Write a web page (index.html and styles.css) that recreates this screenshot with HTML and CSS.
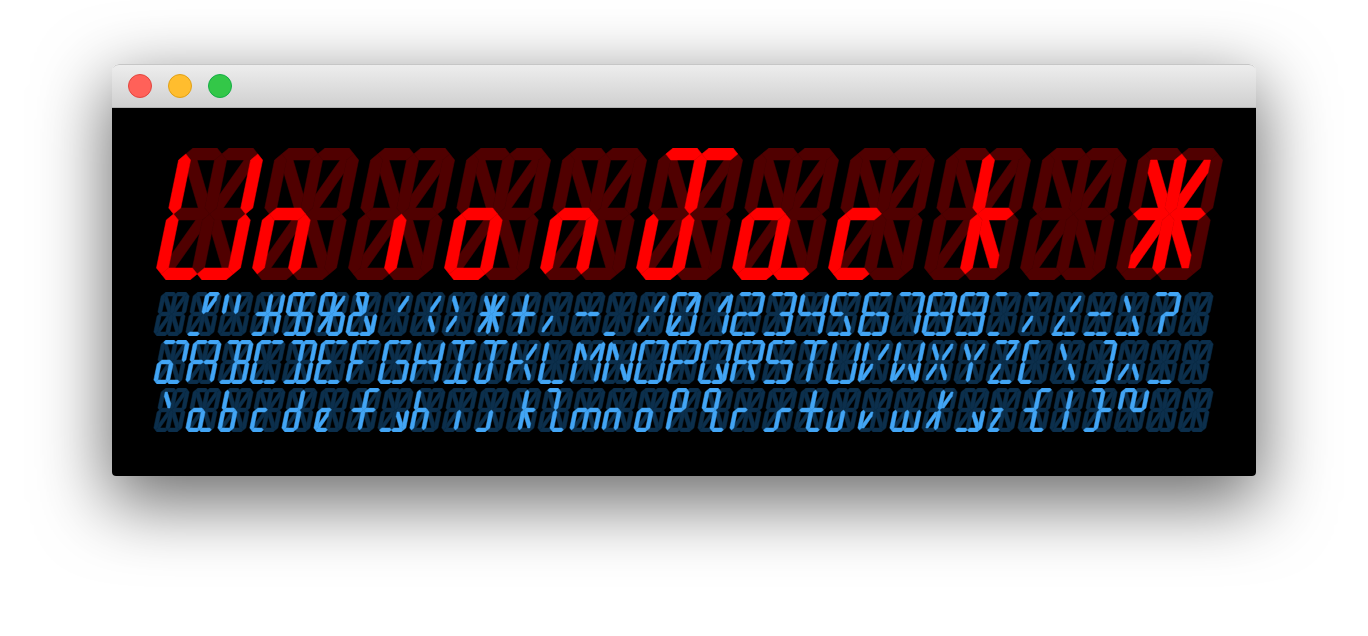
FILE: index.html
```html
<!DOCTYPE html>
<html lang="en">
<head>
<meta charset="utf-8">
<title>Union Jack *</title>
<link rel="stylesheet" href="styles.css">
</head>
<body>
<main class="window">
  <header class="titlebar">
    <span class="light light-close"></span>
    <span class="light light-min"></span>
    <span class="light light-max"></span>
  </header>
  <section class="screen">
    <svg class="display display-large" data-text="UnionJack *" data-cells="11"></svg>
    <div class="charset">
      <svg class="display display-small" data-text=" !&quot;#$%&amp;'()*+,-./0123456789:;&lt;=&gt;?" data-cells="33"></svg>
      <svg class="display display-small" data-text="@ABCDEFGHIJKLMNOPQRSTUVWXYZ[\]^_" data-cells="33"></svg>
      <svg class="display display-small" data-text="`abcdefghijklmnopqrstuvwxyz{|}~" data-cells="33"></svg>
    </div>
  </section>
</main>
<script src="script.js"></script>
</body>
</html>
```
FILE: styles.css
```css
html, body {
  margin: 0;
  height: 100%;
  background: #fff;
  overflow: hidden;
}
body {
  padding-top: 64px;
  box-sizing: border-box;
}
.window {
  width: 1144px;
  margin: 0 auto;
  border-radius: 7px 7px 4px 4px;
  box-shadow: 0 23px 70px 4px rgba(0, 0, 0, 0.58);
  overflow: hidden;
}
.titlebar {
  box-sizing: border-box;
  height: 44px;
  display: flex;
  align-items: center;
  gap: 16px;
  padding-left: 16px;
  background: linear-gradient(#ededed, #d0d0d0);
  border-top: 1px solid #c6c6c6;
  border-bottom: 1px solid #b4b4b4;
  border-radius: 7px 7px 0 0;
}
.light {
  box-sizing: border-box;
  width: 24px;
  height: 24px;
  border-radius: 50%;
  border: 1px solid;
}
.light-close { background: #ff6159; border-color: #e2463f; }
.light-min { background: #ffbd2e; border-color: #e1a116; }
.light-max { background: #33c748; border-color: #14ae46; }
.screen {
  background: #000;
  height: 368px;
  padding: 40px 0 0 41px;
  box-sizing: border-box;
  display: flex;
  flex-direction: column;
  gap: 12px;
}
.charset {
  display: flex;
  flex-direction: column;
  gap: 4px;
}
.display {
  display: block;
  flex: none;
}
.display-large { margin-left: 1px; }
.display-large .seg-off { fill: #500000; stroke: #500000; stroke-width: 0.5; }
.display-large .seg-on { fill: #ff0000; stroke: #ff0000; stroke-width: 0.5; }
.display-small .seg-off { fill: #0c2f4c; stroke: #0c2f4c; stroke-width: 1.5; }
.display-small .seg-on { fill: #42a5f5; stroke: #42a5f5; stroke-width: 1.5; }
```
FILE: script.js
```js
// Sixteen-segment display: segment outlines in a 84x132 cell, and the font.
var SEGMENTS = {
  a1: "6,6 12,0 36,0 42,6 36,12 12,12",
  a2: "42,6 48,0 72,0 78,6 72,12 48,12",
  b: "72,12 78,6 84,12 84,60 78,66 72,60",
  c: "72,72 78,66 84,72 84,120 78,126 72,120",
  d1: "6,126 12,120 36,120 42,126 36,132 12,132",
  d2: "42,126 48,120 72,120 78,126 72,132 48,132",
  e: "0,72 6,66 12,72 12,120 6,126 0,120",
  f: "0,12 6,6 12,12 12,60 6,66 0,60",
  g1: "6,66 12,60 36,60 42,66 36,72 12,72",
  g2: "42,66 48,60 72,60 78,66 72,72 48,72",
  h: "12,12 18.5,12 36,47 36,60 29.5,60 12,25",
  i: "36,12 42,6 48,12 48,60 42,66 36,60",
  j: "65.5,12 72,12 72,25 54.5,60 48,60 48,47",
  k: "48,72 54.5,72 72,107 72,120 65.5,120 48,85",
  l: "36,72 42,66 48,72 48,120 42,126 36,120",
  m: "36,72 36,85 18.5,120 12,120 12,107 29.5,72"
};

var FONT = {
  " ": "",
  "!": "i j a2 d1",
  "\"": "f i",
  "#": "b c g1 g2 i l d1",
  "$": "a1 a2 f g1 g2 c d1 d2 i l",
  "%": "a1 f g1 i j m g2 c d2 l",
  "&": "a1 h i g1 e d1 d2 k c",
  "'": "j",
  "(": "j k",
  ")": "h m",
  "*": "g1 g2 h i j k l m",
  "+": "g1 g2 i l",
  ",": "m",
  "-": "g1 g2",
  ".": "d1",
  "/": "j m",
  "0": "a1 a2 b c d1 d2 e f j m",
  "1": "j b c",
  "2": "a1 a2 b g1 g2 e d1 d2",
  "3": "a1 a2 b g2 c d1 d2",
  "4": "f g1 g2 b c",
  "5": "a1 a2 f g1 k d1 d2",
  "6": "a1 a2 f g1 g2 c d1 d2 e",
  "7": "a1 a2 b c",
  "8": "a1 a2 b c d1 d2 e f g1 g2",
  "9": "a1 a2 b c d1 d2 f g1 g2",
  ":": "a1 d1",
  ";": "a1 m",
  "<": "j m d1 d2",
  "=": "g1 g2 d1 d2",
  ">": "h k d1 d2",
  "?": "a1 a2 b g2 l",
  "@": "a1 a2 b g1 l e d1 d2",
  "A": "a1 a2 b c e f g1 g2",
  "B": "a1 a2 b c d1 d2 g2 i l",
  "C": "a1 a2 f e d1 d2",
  "D": "a1 a2 b c d1 d2 i l",
  "E": "a1 a2 f e d1 d2 g1",
  "F": "a1 a2 f e g1",
  "G": "a1 a2 f e d1 d2 c g2",
  "H": "f e b c g1 g2",
  "I": "a1 a2 i l d1 d2",
  "J": "a1 a2 i l e d1",
  "K": "f e g1 j k",
  "L": "f e d1 d2",
  "M": "f e b c h j",
  "N": "f e b c h k",
  "O": "a1 a2 b c d1 d2 e f",
  "P": "a1 a2 b e f g1 g2",
  "Q": "a1 a2 b c d1 d2 e f k",
  "R": "a1 a2 b e f g1 g2 k",
  "S": "a1 a2 f g1 g2 c d1 d2",
  "T": "a1 a2 i l",
  "U": "f e b c d1 d2",
  "V": "f e m j",
  "W": "f e b c m k",
  "X": "h j k m",
  "Y": "h j l",
  "Z": "a1 a2 j m d1 d2",
  "[": "a1 f e d1",
  "\\": "h k",
  "]": "a2 b c d2",
  "^": "m k",
  "_": "d1 d2",
  "`": "h",
  "a": "e g1 l d1 d2",
  "b": "f e g1 l d1",
  "c": "e g1 d1",
  "d": "i l e g1 d1",
  "e": "e g1 m d1",
  "f": "a2 i l g1 g2",
  "g": "k c d1 d2",
  "h": "f e g1 l",
  "i": "l",
  "j": "l d1",
  "k": "i l g2 k",
  "l": "a1 i l d2",
  "m": "e g1 g2 l c",
  "n": "e g1 l",
  "o": "e g1 l d1",
  "p": "a1 f e i g1",
  "q": "a1 f g1 i l d2",
  "r": "e g1",
  "s": "g2 l d1",
  "t": "i l g1 g2 d2",
  "u": "e l d1",
  "v": "e m",
  "w": "e l c d1 d2",
  "x": "i j l m",
  "y": "k c d1 d2",
  "z": "g1 m d1",
  "{": "a2 i l g1 d2",
  "|": "i l",
  "}": "a1 i l g2 d1",
  "~": "f a1 i g2 b"
};

var SVG_NS = "http://www.w3.org/2000/svg";
var CELL_PITCH = 96;
var CELL_WIDTH = 84;
var CELL_HEIGHT = 132;
var SLANT = 0.205;

function el(name, attrs) {
  var node = document.createElementNS(SVG_NS, name);
  for (var key in attrs) node.setAttribute(key, attrs[key]);
  return node;
}

document.querySelectorAll(".display").forEach(function (svg) {
  var text = svg.dataset.text;
  var cells = Number(svg.dataset.cells);
  var scale = svg.classList.contains("display-small") ? 1 / 3 : 1;
  var slantWidth = CELL_HEIGHT * SLANT;
  var width = CELL_PITCH * (cells - 1) + CELL_WIDTH + slantWidth;

  svg.setAttribute("viewBox", "0 0 " + width + " " + CELL_HEIGHT);
  svg.setAttribute("width", width * scale);
  svg.setAttribute("height", CELL_HEIGHT * scale);
  svg.setAttribute("role", "img");
  svg.setAttribute("aria-label", text);

  for (var n = 0; n < cells; n++) {
    var lit = (FONT[text.charAt(n)] || "").split(" ");
    var tx = n * CELL_PITCH + slantWidth;
    var cell = el("g", { transform: "matrix(1 0 " + -SLANT + " 1 " + tx + " 0)" });
    var names = Object.keys(SEGMENTS);
    var dark = names.filter(function (name) { return lit.indexOf(name) < 0; });
    var bright = names.filter(function (name) { return lit.indexOf(name) >= 0; });
    dark.forEach(function (name) {
      cell.appendChild(el("polygon", { points: SEGMENTS[name], "class": "seg-off" }));
    });
    bright.forEach(function (name) {
      cell.appendChild(el("polygon", { points: SEGMENTS[name], "class": "seg-on" }));
    });
    svg.appendChild(cell);
  }
});
```
